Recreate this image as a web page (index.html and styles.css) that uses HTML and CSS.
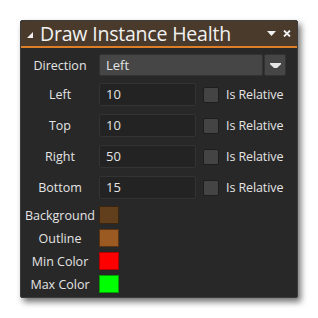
FILE: index.html
```html
<!DOCTYPE html>
<html lang="en">
<head>
    <meta charset="UTF-8">
    <meta name="viewport" content="width=device-width, initial-scale=1.0">
    <title>Draw Instance Health</title>
    <link rel="stylesheet" href="styles.css">
</head>
<body>
    <div class="panel">
        <div class="panel-header">
            <svg class="corner-icon" width="6" height="6" viewBox="0 0 6 6"><polygon points="6,0 6,6 0,6" fill="#f0f0f0"/></svg>
            <span class="panel-title">Draw Instance Health</span>
            <svg class="head-btn" width="9" height="5" viewBox="0 0 9 5"><polygon points="0,0 9,0 4.5,5" fill="#f0f0f0"/></svg>
            <svg class="head-btn close" width="8" height="7" viewBox="0 0 8 7"><path d="M1 0.5 L7 6.5 M7 0.5 L1 6.5" stroke="#f0f0f0" stroke-width="1.8"/></svg>
        </div>
        <div class="panel-body">
            <div class="row row-direction">
                <label class="field-label">Direction</label>
                <div class="select">
                    <span class="select-value">Left</span>
                    <span class="select-btn">
                        <svg width="11" height="5" viewBox="0 0 11 5"><path d="M0 0H11V1.2L7 5H4L0 1.2Z" fill="#e6e6e6"/></svg>
                    </span>
                </div>
            </div>
            <div class="row row-input">
                <label class="field-label">Left</label>
                <div class="text-input">10</div>
                <span class="checkbox"></span>
                <span class="check-label">Is Relative</span>
            </div>
            <div class="row row-input">
                <label class="field-label">Top</label>
                <div class="text-input">10</div>
                <span class="checkbox"></span>
                <span class="check-label">Is Relative</span>
            </div>
            <div class="row row-input">
                <label class="field-label">Right</label>
                <div class="text-input">50</div>
                <span class="checkbox"></span>
                <span class="check-label">Is Relative</span>
            </div>
            <div class="row row-input">
                <label class="field-label">Bottom</label>
                <div class="text-input">15</div>
                <span class="checkbox"></span>
                <span class="check-label">Is Relative</span>
            </div>
            <div class="colors">
                <div class="row row-color">
                    <label class="field-label">Background</label>
                    <span class="swatch swatch-bg"></span>
                </div>
                <div class="row row-color">
                    <label class="field-label">Outline</label>
                    <span class="swatch swatch-outline"></span>
                </div>
                <div class="row row-color">
                    <label class="field-label">Min Color</label>
                    <span class="swatch swatch-min"></span>
                </div>
                <div class="row row-color">
                    <label class="field-label">Max Color</label>
                    <span class="swatch swatch-max"></span>
                </div>
            </div>
        </div>
    </div>
</body>
</html>
```

FILE: styles.css
```css
body {
    margin: 0;
    padding: 20px;
    background-color: #ffffff;
    font-family: "Open Sans", "Noto Sans", sans-serif;
    color: #e4e4e4;
}
.panel {
    width: 278px;
    height: 278px;
    box-sizing: border-box;
    background-color: #282828;
    border: 1px solid #3c3c3c;
    border-radius: 2px;
    box-shadow: 3px 4px 6px rgba(0, 0, 0, 0.55);
}
.panel-header {
    display: flex;
    align-items: center;
    height: 25px;
    padding: 0 6px;
    background-color: #4a3a2b;
    border-bottom: 2px solid #dc7f28;
    border-radius: 2px 2px 0 0;
}
.corner-icon {
    margin: 3px 7px 0 0;
}
.panel-title {
    flex: 1;
    font-size: 19.5px;
    line-height: 25px;
    color: #f2f2f2;
    letter-spacing: -0.2px;
}
.head-btn {
    margin-left: 7px;
}
.head-btn.close {
    margin-left: 7px;
    margin-right: 0;
}
.panel-body {
    padding: 6px 11px 0 0;
    display: flex;
    flex-direction: column;
}
.row {
    display: flex;
    align-items: center;
}
.field-label {
    width: 78px;
    flex: none;
    text-align: center;
    font-size: 12.5px;
    color: #e4e4e4;
}
.row-direction {
    height: 22px;
    margin-bottom: 7px;
}
.select {
    flex: 1;
    height: 22px;
    display: flex;
}
.select-value {
    flex: 1;
    box-sizing: border-box;
    background-color: #464646;
    border: 1px solid #333;
    border-radius: 2px;
    padding-left: 6px;
    font-size: 13px;
    line-height: 20px;
}
.select-btn {
    width: 22px;
    margin-left: 1px;
    box-sizing: border-box;
    background-color: #464646;
    border: 1px solid #333;
    border-radius: 2px;
    display: flex;
    align-items: center;
    justify-content: center;
}
.row-input {
    height: 23px;
    margin-bottom: 8px;
}
.text-input {
    width: 97px;
    height: 23px;
    box-sizing: border-box;
    background-color: #232323;
    border: 1px solid #333;
    border-radius: 2px;
    padding-left: 6px;
    font-size: 13px;
    line-height: 21px;
}
.checkbox {
    width: 16px;
    height: 16px;
    box-sizing: border-box;
    margin-left: 7px;
    background-color: #444;
    border: 1px solid #1e1e1e;
    border-radius: 2px;
}
.check-label {
    margin-left: 7px;
    font-size: 12.5px;
    letter-spacing: -0.1px;
}
.colors {
    display: flex;
    flex-direction: column;
    gap: 5px;
    margin-top: -1px;
}
.row-color {
    height: 18px;
}
.swatch {
    width: 20px;
    height: 18px;
    box-sizing: border-box;
    border: 1px solid;
}
.swatch-bg {
    background-color: #613f1c;
    border-color: #3c250f;
}
.swatch-outline {
    background-color: #9b5a22;
    border-color: #5a3412;
}
.swatch-min {
    background-color: #ff0000;
    border-color: #b00000;
}
.swatch-max {
    background-color: #00ff00;
    border-color: #00a000;
}
```
